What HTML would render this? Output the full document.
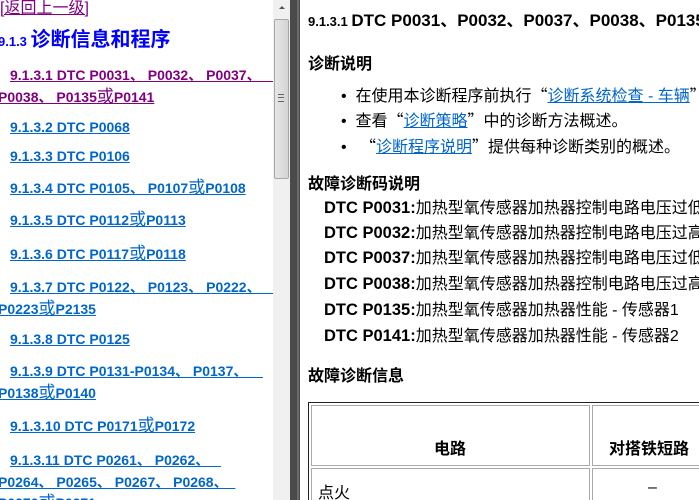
<!DOCTYPE html>
<html style="overflow:hidden;width:699px;height:500px"><head><meta charset="utf-8"><style>
*{margin:0;padding:0}
body{width:699px;height:500px;overflow:hidden;background:#fff;position:relative;font-family:"Liberation Sans","Noto Sans CJK SC",sans-serif}
.a{position:absolute;white-space:nowrap}
.l{font-size:14px;font-weight:bold;color:#0066cc;text-decoration:underline;line-height:18px;height:18px}
.l b{font-size:17px;font-weight:normal;line-height:14px}
.v{color:#800080}
.h{font-weight:bold;font-size:16px}
.t{font-size:16px}
.t a{color:#0066cc;text-decoration:underline}
.q{font-family:"Noto Sans CJK SC",sans-serif}
.d{font-size:16px;line-height:20px}
.d b{font-size:16.5px}
#lf{position:absolute;left:0;top:0;width:273px;height:500px;overflow:hidden}
</style></head><body>
<div id="lf">
<div class="a" style="left:0;top:0;font-size:16px;color:#800080;text-decoration:underline;line-height:18px">[返回上一级]</div>
<div class="a" style="left:-2px;top:27px;color:#0000ff;font-weight:bold;line-height:26px"><span style="font-size:13px">9.1.3 </span><span style="font-size:20px">诊断信息和程序</span></div>
<div class="a l v" style="left:10px;top:66px;width:270px">9.1.3.1 DTC P0031、 P0032、 P0037、&nbsp;&nbsp;&nbsp;&nbsp;&nbsp;&nbsp;&nbsp;&nbsp;&nbsp;&nbsp;&nbsp;</div>
<div class="a l v" style="left:-2px;top:88px">P0038、 P0135<b>或</b>P0141</div>
<div class="a l" style="left:10px;top:118px">9.1.3.2 DTC P0068</div>
<div class="a l" style="left:10px;top:147px">9.1.3.3 DTC P0106</div>
<div class="a l" style="left:10px;top:179px">9.1.3.4 DTC P0105、 P0107<b>或</b>P0108</div>
<div class="a l" style="left:10px;top:211px">9.1.3.5 DTC P0112<b>或</b>P0113</div>
<div class="a l" style="left:10px;top:245px">9.1.3.6 DTC P0117<b>或</b>P0118</div>
<div class="a l" style="left:10px;top:278px">9.1.3.7 DTC P0122、 P0123、 P0222、&nbsp;&nbsp;&nbsp;&nbsp;&nbsp;&nbsp;&nbsp;&nbsp;&nbsp;&nbsp;</div>
<div class="a l" style="left:-2px;top:300px">P0223<b>或</b>P2135</div>
<div class="a l" style="left:10px;top:330px">9.1.3.8 DTC P0125</div>
<div class="a l" style="left:10px;top:362px">9.1.3.9 DTC P0131-P0134、 P0137、&nbsp;&nbsp;&nbsp;&nbsp;</div>
<div class="a l" style="left:-2px;top:384px">P0138<b>或</b>P0140</div>
<div class="a l" style="left:10px;top:417px">9.1.3.10 DTC P0171<b>或</b>P0172</div>
<div class="a l" style="left:10px;top:451px">9.1.3.11 DTC P0261、 P0262、&nbsp;&nbsp;&nbsp;</div>
<div class="a l" style="left:-2px;top:473px">P0264、 P0265、 P0267、 P0268、&nbsp;&nbsp;</div>
<div class="a l" style="left:-2px;top:494px">P0270<b>或</b>P0271</div>
</div>
<!-- scrollbar -->
<div class="a" style="left:273px;top:0;width:17px;height:500px;background:#f0f0f0"></div>
<div class="a" style="left:279px;top:6px;width:0;height:0;border-left:3px solid transparent;border-right:3px solid transparent;border-bottom:3px solid #555"></div>
<div class="a" style="left:274px;top:19px;width:13px;height:158px;background:linear-gradient(90deg,#e6e6e6,#d4d4d4);border:1px solid #a8a8a8;border-radius:2px"></div>
<div class="a" style="left:278px;top:94px;width:6px;height:6px;border-top:1px solid #666;border-bottom:1px solid #666"><div style="margin-top:2px;border-top:1px solid #666"></div></div>
<div class="a" style="left:290px;top:0;width:10px;height:500px;background:#4a4a4a"></div>
<div class="a" style="left:297px;top:0;width:2px;height:500px;background:#6a6a6a"></div>
<!-- right -->
<div class="a" style="left:308px;top:10px;font-weight:bold;line-height:22px"><span style="font-size:13px">9.1.3.1 </span><span style="font-size:17px">DTC P0031、P0032、P0037、P0038、P0135</span></div>
<div class="a h" style="left:308px;top:50px">诊断说明</div>
<div class="a t" style="left:341px;top:82px">•&nbsp;&nbsp;在使用本诊断程序前执行<span class="q">“</span><a>诊断系统检查 - 车辆</a><span class="q">”</span></div>
<div class="a t" style="left:341px;top:107px">•&nbsp;&nbsp;查看<span class="q">“</span><a>诊断策略</a><span class="q">”</span>中的诊断方法概述。</div>
<div class="a t" style="left:341px;top:133px">•&nbsp;&nbsp;&nbsp;<span class="q">“</span><a>诊断程序说明</a><span class="q">”</span>提供每种诊断类别的概述。</div>
<div class="a h" style="left:308px;top:170px">故障诊断码说明</div>
<div class="a d" style="left:324px;top:198px"><b>DTC P0031:</b>加热型氧传感器加热器控制电路电压过低</div>
<div class="a d" style="left:324px;top:223px"><b>DTC P0032:</b>加热型氧传感器加热器控制电路电压过高</div>
<div class="a d" style="left:324px;top:248px"><b>DTC P0037:</b>加热型氧传感器加热器控制电路电压过低</div>
<div class="a d" style="left:324px;top:274px"><b>DTC P0038:</b>加热型氧传感器加热器控制电路电压过高</div>
<div class="a d" style="left:324px;top:300px"><b>DTC P0135:</b>加热型氧传感器加热器性能 - 传感器1</div>
<div class="a d" style="left:324px;top:326px"><b>DTC P0141:</b>加热型氧传感器加热器性能 - 传感器2</div>
<div class="a h" style="left:308px;top:362px">故障诊断信息</div>
<div class="a" style="left:308px;top:402px;width:420px;height:120px;border:1px solid #222;border-right:none"></div>
<div class="a" style="left:311px;top:405px;width:277px;height:59px;border:1px solid #aaa"></div>
<div class="a" style="left:592px;top:405px;width:140px;height:59px;border:1px solid #aaa"></div>
<div class="a" style="left:311px;top:468px;width:277px;height:40px;border:1px solid #aaa"></div>
<div class="a" style="left:592px;top:468px;width:140px;height:40px;border:1px solid #aaa"></div>
<div class="a" style="left:434px;top:435px;font-weight:bold;font-size:16px">电路</div>
<div class="a" style="left:609px;top:435px;font-weight:bold;font-size:16px">对搭铁短路</div>
<div class="a" style="left:318px;top:479px;font-size:16px">点火</div>
<div class="a" style="left:648px;top:479px;font-size:16px">–</div>
</body></html>
